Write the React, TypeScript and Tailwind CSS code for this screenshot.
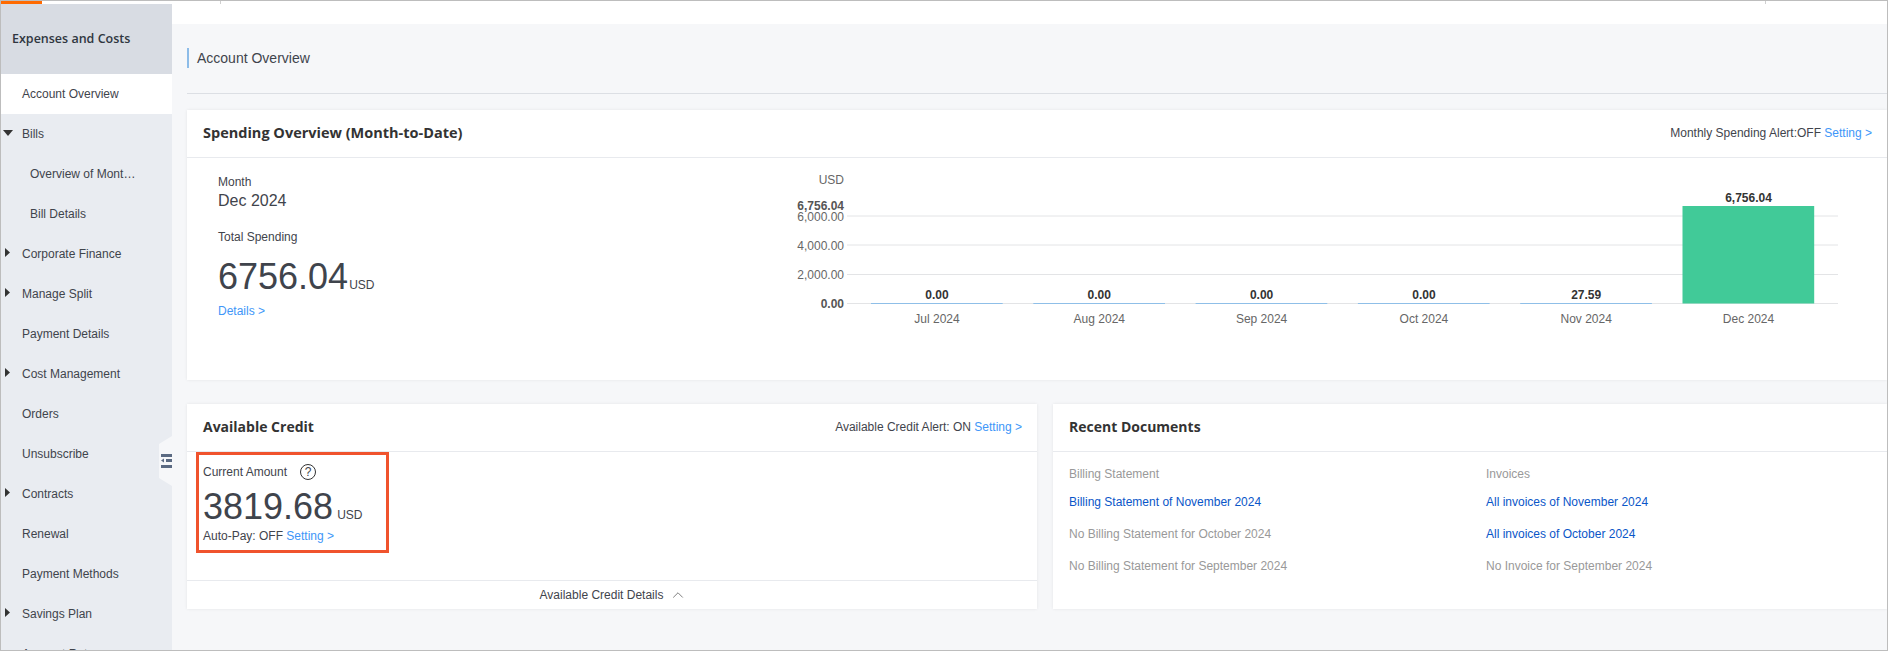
import { ChevronUp } from "lucide-react";

const menu = [
  { label: "Account Overview", active: true },
  { label: "Bills", arrow: "down" },
  { label: "Overview of Monthly Bills", sub: true },
  { label: "Bill Details", sub: true },
  { label: "Corporate Finance", arrow: "right" },
  { label: "Manage Split", arrow: "right" },
  { label: "Payment Details" },
  { label: "Cost Management", arrow: "right" },
  { label: "Orders" },
  { label: "Unsubscribe" },
  { label: "Contracts", arrow: "right" },
  { label: "Renewal" },
  { label: "Payment Methods" },
  { label: "Savings Plan", arrow: "right" },
  { label: "Account Rates" },
];

const bars = [
  { month: "Jul 2024", value: "0.00" },
  { month: "Aug 2024", value: "0.00" },
  { month: "Sep 2024", value: "0.00" },
  { month: "Oct 2024", value: "0.00" },
  { month: "Nov 2024", value: "27.59" },
  { month: "Dec 2024", value: "6,756.04" },
];

const gridLines = [
  { y: 58, label: "6,000.00", base: 63 },
  { y: 87, label: "4,000.00", base: 92 },
  { y: 116.5, label: "2,000.00", base: 121 },
  { y: 145.5, label: "0.00", base: 150 },
];

function MenuArrow({ dir }: { dir?: string }) {
  if (dir === "down") {
    return (
      <svg width="10" height="6" viewBox="0 0 10 6" className="absolute left-[2px] top-[16px]">
        <path d="M0 0H10L5 6Z" fill="#333" />
      </svg>
    );
  }
  if (dir === "right") {
    return (
      <svg width="5" height="9" viewBox="0 0 5 9" className="absolute left-[4px] top-[14px]">
        <path d="M0 0L5 4.5L0 9Z" fill="#333" />
      </svg>
    );
  }
  return null;
}

function Sidebar() {
  return (
    <aside className="relative w-[171px] shrink-0 overflow-hidden bg-[#e9ecf1] text-xs text-[#3f444c]">
      <div className="flex h-[70px] items-center bg-[#d8dce3] pl-[11px] font-['Open_Sans',sans-serif] text-[12.5px] font-semibold text-[#2f3640]">
        Expenses and Costs
      </div>
      {menu.map((item) => (
        <div
          key={item.label}
          className={`relative flex h-10 items-center ${item.sub ? "pl-[29px]" : "pl-[21px]"} ${item.active ? "bg-white" : ""}`}
        >
          <MenuArrow dir={item.arrow} />
          <span className={item.sub ? "w-[108px] truncate" : ""}>{item.label}</span>
        </div>
      ))}
      <div className="absolute right-0 top-[432px] flex h-[50px] w-[13px] items-center justify-end bg-[#f6f7f9] [clip-path:polygon(100%_0,100%_100%,0_84%,0_16%)]">
        <svg width="11" height="14" viewBox="0 0 11 14">
          <path d="M0 0H11V3H0ZM5 5H11V8H5ZM0 11H11V14H0Z" fill="#5b6a82" />
          <path d="M3 4.5V8.5L0 6.5Z" fill="#5b6a82" />
        </svg>
      </div>
    </aside>
  );
}

function CardHeader({ title, large, children }: { title: string; large?: boolean; children?: React.ReactNode }) {
  return (
    <div className="flex h-[48px] items-center justify-between border-b border-[#e8eaee] pb-px pl-4 pr-[15px]">
      <h2 className={`font-['Open_Sans',sans-serif] font-bold text-[#333] ${large ? "text-[14.5px]" : "text-sm"}`}>{title}</h2>
      {children && <div className="text-xs text-[#3f444c]">{children}</div>}
    </div>
  );
}

function SpendingChart() {
  return (
    <svg width="1080" height="222" viewBox="0 0 1080 222" className="shrink-0 text-xs">
      <text x="64" y="26" textAnchor="end" className="fill-[#666]">USD</text>
      <text x="64" y="52" textAnchor="end" className="fill-[#555] font-bold">6,756.04</text>
      {gridLines.map((g) => (
        <g key={g.label}>
          <line x1="67" x2="1058" y1={g.y} y2={g.y} stroke="#e3e4e6" />
          <text x="64" y={g.base} textAnchor="end" className={g.label === "0.00" ? "fill-[#555] font-bold" : "fill-[#666]"}>
            {g.label}
          </text>
        </g>
      ))}
      {bars.map((b, i) => {
        const x = 91 + i * 162.3;
        const last = i === bars.length - 1;
        return (
          <g key={b.month}>
            {last ? (
              <rect x={x} y="48" width="131.7" height="97.5" fill="#41ca98" />
            ) : (
              <rect x={x} y="145" width="131.7" height="1" fill="#8fbfe8" />
            )}
            <text x={x + 66} y={last ? 44 : 141} textAnchor="middle" className="fill-[#333] font-bold">
              {b.value}
            </text>
            <text x={x + 66} y="165" textAnchor="middle" className="fill-[#666]">
              {b.month}
            </text>
          </g>
        );
      })}
    </svg>
  );
}

export default function App() {
  return (
    <div className="flex h-[651px] w-[1888px] flex-col overflow-hidden border border-[#bdbdbd] bg-white font-['Liberation_Sans',Arial,sans-serif]">
      <div className="relative h-[3px] shrink-0 bg-white">
        <div className="h-full w-[41px] bg-[#ff6a00]" />
        <div className="absolute left-[219px] top-0 h-full w-px bg-[#d0d0d0]" />
        <div className="absolute left-[1764px] top-0 h-full w-px bg-[#d0d0d0]" />
      </div>
      <div className="flex min-h-0 flex-1 shadow-[inset_0_4px_4px_-3px_rgba(0,0,0,0.12)]">
        <Sidebar />
        <main className="flex min-w-0 flex-1 flex-col">
          <div className="h-5 shrink-0 bg-white" />
          <div className="flex-1 bg-[#f6f7f9] pl-[15px]">
            <div className="flex h-[70px] items-start border-b border-[#dcdfe4] pt-6">
              <div className="flex h-5 items-center border-l-2 border-[#8dbce8] pl-2 text-sm text-[#3f444c]">
                Account Overview
              </div>
            </div>

            <section className="mt-4 h-[270px] bg-white shadow-[0_0_3px_rgba(0,0,0,0.08)]">
              <CardHeader title="Spending Overview (Month-to-Date)" large>
                Monthly Spending Alert:OFF <span className="text-[#4096f8]">Setting &gt;</span>
              </CardHeader>
              <div className="flex">
                <div className="w-[593px] shrink-0 pl-[31px] pt-[17px] text-xs leading-[14px] text-[#3f444c]">
                  <div>Month</div>
                  <div className="mt-[3px] text-base leading-[18px]">Dec 2024</div>
                  <div className="mt-[20px]">Total Spending</div>
                  <div className="mt-[13px] flex items-baseline leading-10">
                    <span className="text-4xl leading-10">6756.04</span>
                    <span className="ml-[1px] text-xs">USD</span>
                  </div>
                  <div className="mt-[7px] text-[#4096f8]">Details &gt;</div>
                </div>
                <SpendingChart />
              </div>
            </section>

            <div className="mt-6 grid h-[205px] grid-cols-[850px_1fr] gap-4">
              <section className="flex flex-col bg-white shadow-[0_0_3px_rgba(0,0,0,0.08)]">
                <CardHeader title="Available Credit">
                  Available Credit Alert: ON <span className="text-[#4096f8]">Setting &gt;</span>
                </CardHeader>
                <div className="h-[129px] border-b border-[#e8eaee]">
                  <div className="ml-[9px] h-[101px] w-[193px] border-[3px] border-[#f0532d] pl-1 pt-[9px] text-xs leading-[14px] text-[#3f444c]">
                    <div className="flex items-center">
                      Current Amount
                      <span className="ml-[13px] flex h-4 w-4 items-center justify-center rounded-full border border-[#333] text-xs">?</span>
                    </div>
                    <div className="mt-[7px] flex items-baseline">
                      <span className="text-4xl leading-10">3819.68</span>
                      <span className="ml-[4px]">USD</span>
                    </div>
                    <div className="mt-[2px]">
                      Auto-Pay: OFF <span className="text-[#4096f8]">Setting &gt;</span>
                    </div>
                  </div>
                </div>
                <div className="flex flex-1 items-center justify-center gap-[6px] pl-[3px] text-xs text-[#3f444c]">
                  Available Credit Details
                  <ChevronUp size={18} strokeWidth={1} className="text-[#555]" />
                </div>
              </section>

              <section className="bg-white shadow-[0_0_3px_rgba(0,0,0,0.08)]">
                <CardHeader title="Recent Documents" />
                <div className="grid grid-cols-[417px_1fr] pl-4 pt-[15px] text-xs leading-[14px] text-[#999]">
                  <div>
                    <div>Billing Statement</div>
                    <div className="mt-[14px] text-[#0a56c8]">Billing Statement of November 2024</div>
                    <div className="mt-[18px]">No Billing Statement for October 2024</div>
                    <div className="mt-[18px]">No Billing Statement for September 2024</div>
                  </div>
                  <div>
                    <div>Invoices</div>
                    <div className="mt-[14px] text-[#0a56c8]">All invoices of November 2024</div>
                    <div className="mt-[18px] text-[#0a56c8]">All invoices of October 2024</div>
                    <div className="mt-[18px]">No Invoice for September 2024</div>
                  </div>
                </div>
              </section>
            </div>
          </div>
        </main>
      </div>
    </div>
  );
}
